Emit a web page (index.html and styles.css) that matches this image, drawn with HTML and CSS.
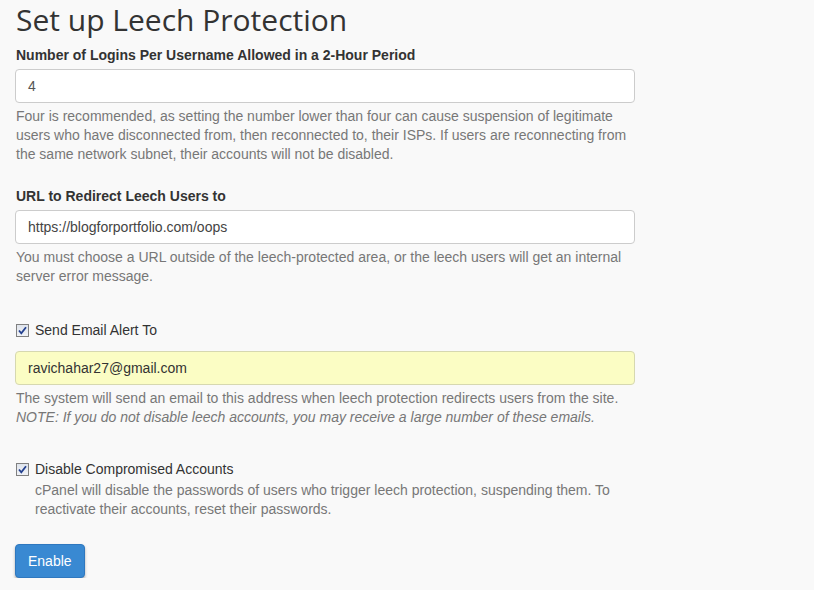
FILE: index.html
```html
<!DOCTYPE html>
<html>
<head>
<meta charset="utf-8">
<link rel="stylesheet" href="styles.css">
</head>
<body>
<div class="page">
  <h1 class="title">Set up Leech Protection</h1>

  <div class="group">
    <label class="label">Number of Logins Per Username Allowed in a 2-Hour Period</label>
    <div class="input input-num">4</div>
    <p class="help">Four is recommended, as setting the number lower than four can cause suspension of legitimate users who have disconnected from, then reconnected to, their ISPs. If users are reconnecting from the same network subnet, their accounts will not be disabled.</p>
  </div>

  <div class="group">
    <label class="label">URL to Redirect Leech Users to</label>
    <div class="input">https://blogforportfolio.com/oops</div>
    <p class="help">You must choose a URL outside of the leech-protected area, or the leech users will get an internal server error message.</p>
  </div>

  <div class="group group-check">
    <div class="check-row">
      <span class="cbox"><svg viewBox="0 0 13 13" width="13" height="13"><path d="M3 6.5 L5.3 9.3 L10 3.2" fill="none" stroke="#23408f" stroke-width="1.8"/></svg></span>
      <span class="check-label">Send Email Alert To</span>
    </div>
    <div class="input input-yellow">ravichahar27@gmail.com</div>
    <p class="help">The system will send an email to this address when leech protection redirects users from the site.<br><em>NOTE: If you do not disable leech accounts, you may receive a large number of these emails.</em></p>
  </div>

  <div class="group group-check2">
    <div class="check-row">
      <span class="cbox"><svg viewBox="0 0 13 13" width="13" height="13"><path d="M3 6.5 L5.3 9.3 L10 3.2" fill="none" stroke="#23408f" stroke-width="1.8"/></svg></span>
      <span class="check-label">Disable Compromised Accounts</span>
    </div>
    <p class="help help-indent">cPanel will disable the passwords of users who trigger leech protection, suspending them. To reactivate their accounts, reset their passwords.</p>
  </div>

  <button class="btn">Enable</button>
</div>
</body>
</html>
```
FILE: styles.css
```css
html, body {
  margin: 0;
  padding: 0;
  background: #f9f9f9;
}
body {
  font-family: "Liberation Sans", Arial, sans-serif;
  color: #333;
}
.page {
  padding: 3px 0 0 15px;
  width: 620px;
}
.title {
  font-family: "Open Sans", sans-serif;
  font-weight: 400;
  font-size: 30px;
  line-height: 33px;
  margin: 0 0 10px 1px;
  color: #333;
}
.group {
  margin-bottom: 23px;
}
.label {
  display: block;
  font-weight: bold;
  font-size: 14px;
  line-height: 18px;
  margin: 0 0 5px 1px;
  color: #333;
}
.input {
  box-sizing: border-box;
  height: 34px;
  border: 1px solid #ccc;
  border-radius: 4px;
  background: #fff;
  padding: 0 12px;
  font-size: 14px;
  line-height: 32px;
  color: #444;
}
.input-num {
  color: #555;
}
.input-yellow {
  background: #fbfdc4;
  border-color: #d6d8b0;
  color: #333;
}
.help {
  margin: 4px 0 0 1px;
  font-size: 14px;
  line-height: 19px;
  color: #777;
}
.help em {
  font-style: italic;
}
.group-check {
  padding-top: 12px;
}
.group-check2 {
  padding-top: 10px;
}
.check-row {
  display: flex;
  align-items: center;
  gap: 6px;
  height: 18px;
  margin-bottom: 12px;
}
.group-check2 .check-row {
  margin-bottom: 3px;
}
.cbox {
  box-sizing: border-box;
  width: 13px;
  height: 13px;
  border: 1px solid #808080;
  background: linear-gradient(#dfe4ec, #f0f2f6);
  display: inline-flex;
  margin-left: 1px;
}
.cbox svg {
  margin: -1px;
}
.check-label {
  font-size: 14px;
  color: #333;
}
.help-indent {
  margin-left: 20px;
  margin-top: 0;
}
.btn {
  display: block;
  margin-top: 25px;
  height: 34px;
  padding: 0 12px;
  background: #3989d2;
  border: 1px solid #2f78bf;
  border-radius: 4px;
  box-shadow: 0 2px 3px rgba(0,0,0,0.3);
  color: #fff;
  font-family: "Liberation Sans", Arial, sans-serif;
  font-size: 14px;
}
```
